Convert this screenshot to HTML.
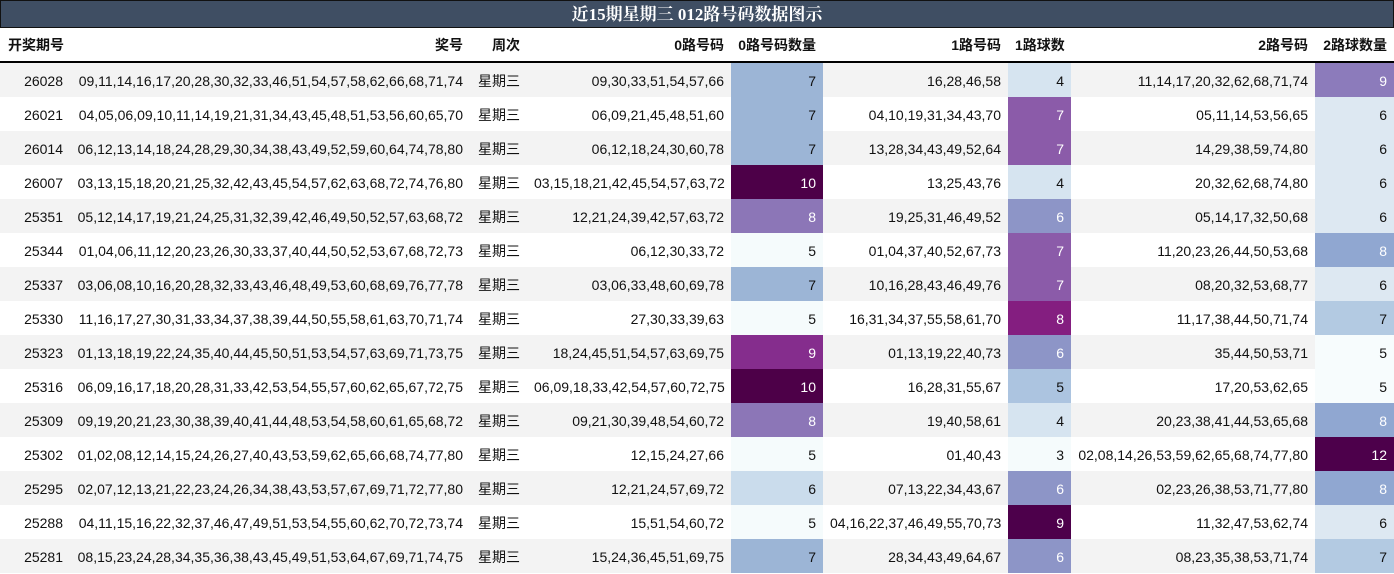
<!DOCTYPE html>
<html><head><meta charset="utf-8"><style>
html,body{margin:0;padding:0;width:1394px;height:574px;overflow:hidden;background:#fff;}
body{font-family:"Liberation Sans","Noto Sans CJK SC",sans-serif;font-size:14px;color:#111;}
.title{position:absolute;left:0;top:0;width:1392px;height:26px;background:#3f4e63;border:1px solid #111;color:#fff;text-align:center;font-weight:bold;font-size:17px;line-height:27px;font-family:"Liberation Serif","Noto Serif CJK SC",serif;}
table{position:absolute;left:0;top:28px;border-collapse:collapse;table-layout:fixed;width:1394px;}
th{font-weight:bold;height:33px;text-align:right;padding:0 7px;border-bottom:2px solid #000;white-space:nowrap;font-size:14px;}
td{height:33px;padding:1px 7px 0 7px;text-align:right;white-space:nowrap;}
tbody tr:nth-child(odd){background:#f3f3f3;}
tbody tr:nth-child(even){background:#fff;}
td.w{text-align:left;padding-left:8px;}
.wh{color:#fff;}
</style></head><body>
<div class="title">近15期星期三 012路号码数据图示</div>
<table>
<colgroup><col style="width:70px"><col style="width:400px"><col style="width:57px"><col style="width:204px"><col style="width:92px"><col style="width:185px"><col style="width:63px"><col style="width:244px"><col style="width:79px"></colgroup>
<thead><tr><th style="text-align:left;padding-left:8px">开奖期号</th><th>奖号</th><th>周次</th><th>0路号码</th><th>0路号码数量</th><th>1路号码</th><th>1路球数</th><th>2路号码</th><th>2路球数量</th></tr></thead>
<tbody>
<tr><td>26028</td><td>09,11,14,16,17,20,28,30,32,33,46,51,54,57,58,62,66,68,71,74</td><td class="w">星期三</td><td>09,30,33,51,54,57,66</td><td style="background:#9cb5d6">7</td><td>16,28,46,58</td><td style="background:#d6e4f0">4</td><td>11,14,17,20,32,62,68,71,74</td><td class="wh" style="background:#8c7bbb">9</td></tr>
<tr><td>26021</td><td>04,05,06,09,10,11,14,19,21,31,34,43,45,48,51,53,56,60,65,70</td><td class="w">星期三</td><td>06,09,21,45,48,51,60</td><td style="background:#9cb5d6">7</td><td>04,10,19,31,34,43,70</td><td class="wh" style="background:#8b5ba9">7</td><td>05,11,14,53,56,65</td><td style="background:#dde8f2">6</td></tr>
<tr><td>26014</td><td>06,12,13,14,18,24,28,29,30,34,38,43,49,52,59,60,64,74,78,80</td><td class="w">星期三</td><td>06,12,18,24,30,60,78</td><td style="background:#9cb5d6">7</td><td>13,28,34,43,49,52,64</td><td class="wh" style="background:#8b5ba9">7</td><td>14,29,38,59,74,80</td><td style="background:#dde8f2">6</td></tr>
<tr><td>26007</td><td>03,13,15,18,20,21,25,32,42,43,45,54,57,62,63,68,72,74,76,80</td><td class="w">星期三</td><td>03,15,18,21,42,45,54,57,63,72</td><td class="wh" style="background:#4d0048">10</td><td>13,25,43,76</td><td style="background:#d6e4f0">4</td><td>20,32,62,68,74,80</td><td style="background:#dde8f2">6</td></tr>
<tr><td>25351</td><td>05,12,14,17,19,21,24,25,31,32,39,42,46,49,50,52,57,63,68,72</td><td class="w">星期三</td><td>12,21,24,39,42,57,63,72</td><td class="wh" style="background:#8c76b7">8</td><td>19,25,31,46,49,52</td><td class="wh" style="background:#8d95c7">6</td><td>05,14,17,32,50,68</td><td style="background:#dde8f2">6</td></tr>
<tr><td>25344</td><td>01,04,06,11,12,20,23,26,30,33,37,40,44,50,52,53,67,68,72,73</td><td class="w">星期三</td><td>06,12,30,33,72</td><td style="background:#f5fbfc">5</td><td>01,04,37,40,52,67,73</td><td class="wh" style="background:#8b5ba9">7</td><td>11,20,23,26,44,50,53,68</td><td class="wh" style="background:#90a7d1">8</td></tr>
<tr><td>25337</td><td>03,06,08,10,16,20,28,32,33,43,46,48,49,53,60,68,69,76,77,78</td><td class="w">星期三</td><td>03,06,33,48,60,69,78</td><td style="background:#9cb5d6">7</td><td>10,16,28,43,46,49,76</td><td class="wh" style="background:#8b5ba9">7</td><td>08,20,32,53,68,77</td><td style="background:#dde8f2">6</td></tr>
<tr><td>25330</td><td>11,16,17,27,30,31,33,34,37,38,39,44,50,55,58,61,63,70,71,74</td><td class="w">星期三</td><td>27,30,33,39,63</td><td style="background:#f5fbfc">5</td><td>16,31,34,37,55,58,61,70</td><td class="wh" style="background:#841e80">8</td><td>11,17,38,44,50,71,74</td><td style="background:#b3cae2">7</td></tr>
<tr><td>25323</td><td>01,13,18,19,22,24,35,40,44,45,50,51,53,54,57,63,69,71,73,75</td><td class="w">星期三</td><td>18,24,45,51,54,57,63,69,75</td><td class="wh" style="background:#852d8d">9</td><td>01,13,19,22,40,73</td><td class="wh" style="background:#8d95c7">6</td><td>35,44,50,53,71</td><td style="background:#f7fcfd">5</td></tr>
<tr><td>25316</td><td>06,09,16,17,18,20,28,31,33,42,53,54,55,57,60,62,65,67,72,75</td><td class="w">星期三</td><td>06,09,18,33,42,54,57,60,72,75</td><td class="wh" style="background:#4d0048">10</td><td>16,28,31,55,67</td><td style="background:#acc4e0">5</td><td>17,20,53,62,65</td><td style="background:#f7fcfd">5</td></tr>
<tr><td>25309</td><td>09,19,20,21,23,30,38,39,40,41,44,48,53,54,58,60,61,65,68,72</td><td class="w">星期三</td><td>09,21,30,39,48,54,60,72</td><td class="wh" style="background:#8c76b7">8</td><td>19,40,58,61</td><td style="background:#d6e4f0">4</td><td>20,23,38,41,44,53,65,68</td><td class="wh" style="background:#90a7d1">8</td></tr>
<tr><td>25302</td><td>01,02,08,12,14,15,24,26,27,40,43,53,59,62,65,66,68,74,77,80</td><td class="w">星期三</td><td>12,15,24,27,66</td><td style="background:#f5fbfc">5</td><td>01,40,43</td><td style="background:#f5fbfc">3</td><td>02,08,14,26,53,59,62,65,68,74,77,80</td><td class="wh" style="background:#4d004b">12</td></tr>
<tr><td>25295</td><td>02,07,12,13,21,22,23,24,26,34,38,43,53,57,67,69,71,72,77,80</td><td class="w">星期三</td><td>12,21,24,57,69,72</td><td style="background:#cadcec">6</td><td>07,13,22,34,43,67</td><td class="wh" style="background:#8d95c7">6</td><td>02,23,26,38,53,71,77,80</td><td class="wh" style="background:#90a7d1">8</td></tr>
<tr><td>25288</td><td>04,11,15,16,22,32,37,46,47,49,51,53,54,55,60,62,70,72,73,74</td><td class="w">星期三</td><td>15,51,54,60,72</td><td style="background:#f5fbfc">5</td><td>04,16,22,37,46,49,55,70,73</td><td class="wh" style="background:#4d004b">9</td><td>11,32,47,53,62,74</td><td style="background:#dde8f2">6</td></tr>
<tr><td>25281</td><td>08,15,23,24,28,34,35,36,38,43,45,49,51,53,64,67,69,71,74,75</td><td class="w">星期三</td><td>15,24,36,45,51,69,75</td><td style="background:#9cb5d6">7</td><td>28,34,43,49,64,67</td><td class="wh" style="background:#8d95c7">6</td><td>08,23,35,38,53,71,74</td><td style="background:#b3cae2">7</td></tr>
</tbody></table>
</body></html>
